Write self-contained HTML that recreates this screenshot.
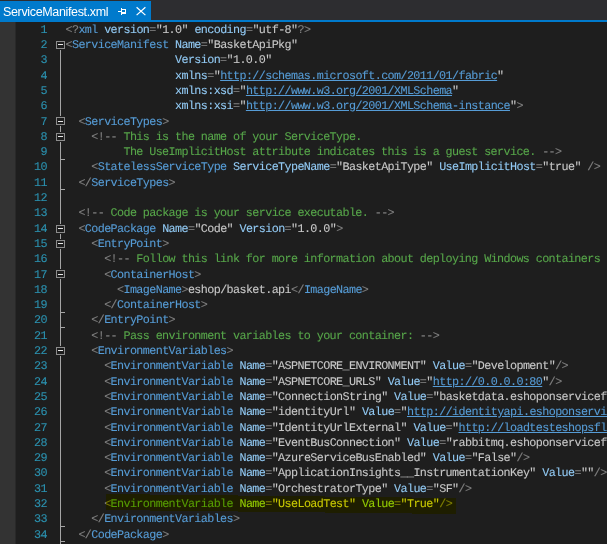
<!DOCTYPE html>
<html><head><meta charset="utf-8"><style>
html,body{margin:0;padding:0;}
body{width:607px;height:544px;overflow:hidden;background:#1E1E1E;position:relative;}
.well{position:absolute;left:0;top:0;width:607px;height:20px;background:#2D2D30;}
.tab{position:absolute;left:0;top:1px;width:151px;height:21px;background:#007ACC;}
.strip{position:absolute;left:0;top:20px;width:607px;height:2px;background:#007ACC;}
.tabt{position:absolute;left:3px;top:0px;font-family:"Liberation Sans",sans-serif;font-size:12.5px;letter-spacing:-0.35px;color:#FFFFFF;white-space:pre;line-height:20px;}
.marg{position:absolute;left:0;top:22px;width:15px;height:522px;background:#333333;border-right:1px solid #292929;}
.ln{position:absolute;text-rendering:geometricPrecision;-webkit-text-stroke:0.1px currentColor;font-family:"Liberation Mono",monospace;font-size:11.75px;letter-spacing:-0.61px;white-space:pre;line-height:15px;height:15px;}
.num{position:absolute;text-rendering:geometricPrecision;-webkit-text-stroke:0.1px currentColor;font-family:"Liberation Mono",monospace;font-size:11.75px;letter-spacing:-0.61px;white-space:pre;line-height:15px;color:#2B91AF;text-align:right;width:40px;}
.d{color:#808080}.n{color:#569CD6}.a{color:#92CAF4}.v{color:#C8C8C8}.c{color:#57A64A}.t{color:#C8C8C8}.u{color:#569CD6;text-decoration:underline;}
</style></head><body>
<div class="well"></div>
<div class="tab"></div>
<div class="strip"></div>
<div class="tabt" style="top:2px">ServiceManifest.xml</div>

<svg style="position:absolute;left:0;top:0" width="607" height="30" shape-rendering="crispEdges">
<g fill="#FFFFFF"><rect x="118" y="11" width="3" height="1"/><rect x="121" y="8" width="1" height="7"/><rect x="122" y="9" width="4" height="1"/><rect x="125" y="9" width="1" height="5"/><rect x="122" y="12" width="3" height="2"/></g>
</svg>
<svg style="position:absolute;left:0;top:0" width="607" height="30">
<path d="M136.6 7.3 L145.4 15.1 M145.4 7.3 L136.6 15.1" stroke="#FFFFFF" stroke-width="1.25" fill="none"/>
</svg>
<div class="marg"></div>

<div class="num" style="left:7.00px;top:23.00px">1</div>
<div class="ln" style="left:65.50px;top:23.00px"><span class="d">&lt;?</span><span class="n">xml</span><span class="t"> </span><span class="a">version</span><span class="d">=</span><span class="v">&quot;1.0&quot;</span><span class="t"> </span><span class="a">encoding</span><span class="d">=</span><span class="v">&quot;utf-8&quot;</span><span class="d">?&gt;</span></div>
<div class="num" style="left:7.00px;top:38.00px">2</div>
<div class="ln" style="left:65.50px;top:38.00px"><span class="d">&lt;</span><span class="n">ServiceManifest</span><span class="t"> </span><span class="a">Name</span><span class="d">=</span><span class="v">&quot;BasketApiPkg&quot;</span></div>
<div class="num" style="left:7.00px;top:53.00px">3</div>
<div class="ln" style="left:65.50px;top:53.00px"><span class="t">                 </span><span class="a">Version</span><span class="d">=</span><span class="v">&quot;1.0.0&quot;</span></div>
<div class="num" style="left:7.00px;top:69.00px">4</div>
<div class="ln" style="left:65.50px;top:69.00px"><span class="t">                 </span><span class="a">xmlns</span><span class="d">=</span><span class="v">&quot;</span><span class="u">http://schemas.microsoft.com/2011/01/fabric</span><span class="v">&quot;</span></div>
<div class="num" style="left:7.00px;top:84.00px">5</div>
<div class="ln" style="left:65.50px;top:84.00px"><span class="t">                 </span><span class="a">xmlns:xsd</span><span class="d">=</span><span class="v">&quot;</span><span class="u">http://www.w3.org/2001/XMLSchema</span><span class="v">&quot;</span></div>
<div class="num" style="left:7.00px;top:99.00px">6</div>
<div class="ln" style="left:65.50px;top:99.00px"><span class="t">                 </span><span class="a">xmlns:xsi</span><span class="d">=</span><span class="v">&quot;</span><span class="u">http://www.w3.org/2001/XMLSchema-instance</span><span class="v">&quot;</span><span class="d">&gt;</span></div>
<div class="num" style="left:7.00px;top:115.00px">7</div>
<div class="ln" style="left:65.50px;top:115.00px"><span class="t">  </span><span class="d">&lt;</span><span class="n">ServiceTypes</span><span class="d">&gt;</span></div>
<div class="num" style="left:7.00px;top:130.00px">8</div>
<div class="ln" style="left:65.50px;top:130.00px"><span class="t">    </span><span class="d">&lt;!--</span><span class="c"> This is the name of your ServiceType.</span></div>
<div class="num" style="left:7.00px;top:145.00px">9</div>
<div class="ln" style="left:65.50px;top:145.00px"><span class="c">         The UseImplicitHost attribute indicates this is a guest service. </span><span class="d">--&gt;</span></div>
<div class="num" style="left:7.00px;top:160.00px">10</div>
<div class="ln" style="left:65.50px;top:160.00px"><span class="t">    </span><span class="d">&lt;</span><span class="n">StatelessServiceType</span><span class="t"> </span><span class="a">ServiceTypeName</span><span class="d">=</span><span class="v">&quot;BasketApiType&quot;</span><span class="t"> </span><span class="a">UseImplicitHost</span><span class="d">=</span><span class="v">&quot;true&quot;</span><span class="t"> </span><span class="d">/&gt;</span></div>
<div class="num" style="left:7.00px;top:176.00px">11</div>
<div class="ln" style="left:65.50px;top:176.00px"><span class="t">  </span><span class="d">&lt;/</span><span class="n">ServiceTypes</span><span class="d">&gt;</span></div>
<div class="num" style="left:7.00px;top:191.00px">12</div>
<div class="num" style="left:7.00px;top:206.00px">13</div>
<div class="ln" style="left:65.50px;top:206.00px"><span class="t">  </span><span class="d">&lt;!--</span><span class="c"> Code package is your service executable. </span><span class="d">--&gt;</span></div>
<div class="num" style="left:7.00px;top:222.00px">14</div>
<div class="ln" style="left:65.50px;top:222.00px"><span class="t">  </span><span class="d">&lt;</span><span class="n">CodePackage</span><span class="t"> </span><span class="a">Name</span><span class="d">=</span><span class="v">&quot;Code&quot;</span><span class="t"> </span><span class="a">Version</span><span class="d">=</span><span class="v">&quot;1.0.0&quot;</span><span class="d">&gt;</span></div>
<div class="num" style="left:7.00px;top:237.00px">15</div>
<div class="ln" style="left:65.50px;top:237.00px"><span class="t">    </span><span class="d">&lt;</span><span class="n">EntryPoint</span><span class="d">&gt;</span></div>
<div class="num" style="left:7.00px;top:252.00px">16</div>
<div class="ln" style="left:65.50px;top:252.00px"><span class="t">      </span><span class="d">&lt;!--</span><span class="c"> Follow this link for more information about deploying Windows containers to Service Fabric</span></div>
<div class="num" style="left:7.00px;top:268.00px">17</div>
<div class="ln" style="left:65.50px;top:268.00px"><span class="t">      </span><span class="d">&lt;</span><span class="n">ContainerHost</span><span class="d">&gt;</span></div>
<div class="num" style="left:7.00px;top:283.00px">18</div>
<div class="ln" style="left:65.50px;top:283.00px"><span class="t">        </span><span class="d">&lt;</span><span class="n">ImageName</span><span class="d">&gt;</span><span class="t">eshop/basket.api</span><span class="d">&lt;/</span><span class="n">ImageName</span><span class="d">&gt;</span></div>
<div class="num" style="left:7.00px;top:298.00px">19</div>
<div class="ln" style="left:65.50px;top:298.00px"><span class="t">      </span><span class="d">&lt;/</span><span class="n">ContainerHost</span><span class="d">&gt;</span></div>
<div class="num" style="left:7.00px;top:313.00px">20</div>
<div class="ln" style="left:65.50px;top:313.00px"><span class="t">    </span><span class="d">&lt;/</span><span class="n">EntryPoint</span><span class="d">&gt;</span></div>
<div class="num" style="left:7.00px;top:329.00px">21</div>
<div class="ln" style="left:65.50px;top:329.00px"><span class="t">    </span><span class="d">&lt;!--</span><span class="c"> Pass environment variables to your container: </span><span class="d">--&gt;</span></div>
<div class="num" style="left:7.00px;top:344.00px">22</div>
<div class="ln" style="left:65.50px;top:344.00px"><span class="t">    </span><span class="d">&lt;</span><span class="n">EnvironmentVariables</span><span class="d">&gt;</span></div>
<div class="num" style="left:7.00px;top:359.00px">23</div>
<div class="ln" style="left:65.50px;top:359.00px"><span class="t">      </span><span class="d">&lt;</span><span class="n">EnvironmentVariable</span><span class="t"> </span><span class="a">Name</span><span class="d">=</span><span class="v">&quot;ASPNETCORE_ENVIRONMENT&quot;</span><span class="t"> </span><span class="a">Value</span><span class="d">=</span><span class="v">&quot;Development&quot;</span><span class="d">/&gt;</span></div>
<div class="num" style="left:7.00px;top:375.00px">24</div>
<div class="ln" style="left:65.50px;top:375.00px"><span class="t">      </span><span class="d">&lt;</span><span class="n">EnvironmentVariable</span><span class="t"> </span><span class="a">Name</span><span class="d">=</span><span class="v">&quot;ASPNETCORE_URLS&quot;</span><span class="t"> </span><span class="a">Value</span><span class="d">=</span><span class="v">&quot;</span><span class="u">http://0.0.0.0:80</span><span class="v">&quot;</span><span class="d">/&gt;</span></div>
<div class="num" style="left:7.00px;top:390.00px">25</div>
<div class="ln" style="left:65.50px;top:390.00px"><span class="t">      </span><span class="d">&lt;</span><span class="n">EnvironmentVariable</span><span class="t"> </span><span class="a">Name</span><span class="d">=</span><span class="v">&quot;ConnectionString&quot;</span><span class="t"> </span><span class="a">Value</span><span class="d">=</span><span class="v">&quot;basketdata.eshoponservicefabric&quot;</span></div>
<div class="num" style="left:7.00px;top:405.00px">26</div>
<div class="ln" style="left:65.50px;top:405.00px"><span class="t">      </span><span class="d">&lt;</span><span class="n">EnvironmentVariable</span><span class="t"> </span><span class="a">Name</span><span class="d">=</span><span class="v">&quot;identityUrl&quot;</span><span class="t"> </span><span class="a">Value</span><span class="d">=</span><span class="v">&quot;</span><span class="u">http://identityapi.eshoponservicefabric</span></div>
<div class="num" style="left:7.00px;top:421.00px">27</div>
<div class="ln" style="left:65.50px;top:421.00px"><span class="t">      </span><span class="d">&lt;</span><span class="n">EnvironmentVariable</span><span class="t"> </span><span class="a">Name</span><span class="d">=</span><span class="v">&quot;IdentityUrlExternal&quot;</span><span class="t"> </span><span class="a">Value</span><span class="d">=</span><span class="v">&quot;</span><span class="u">http://loadtesteshopsfl.westeurope</span></div>
<div class="num" style="left:7.00px;top:436.00px">28</div>
<div class="ln" style="left:65.50px;top:436.00px"><span class="t">      </span><span class="d">&lt;</span><span class="n">EnvironmentVariable</span><span class="t"> </span><span class="a">Name</span><span class="d">=</span><span class="v">&quot;EventBusConnection&quot;</span><span class="t"> </span><span class="a">Value</span><span class="d">=</span><span class="v">&quot;rabbitmq.eshoponservicefabric&quot;</span></div>
<div class="num" style="left:7.00px;top:451.00px">29</div>
<div class="ln" style="left:65.50px;top:451.00px"><span class="t">      </span><span class="d">&lt;</span><span class="n">EnvironmentVariable</span><span class="t"> </span><span class="a">Name</span><span class="d">=</span><span class="v">&quot;AzureServiceBusEnabled&quot;</span><span class="t"> </span><span class="a">Value</span><span class="d">=</span><span class="v">&quot;False&quot;</span><span class="d">/&gt;</span></div>
<div class="num" style="left:7.00px;top:466.00px">30</div>
<div class="ln" style="left:65.50px;top:466.00px"><span class="t">      </span><span class="d">&lt;</span><span class="n">EnvironmentVariable</span><span class="t"> </span><span class="a">Name</span><span class="d">=</span><span class="v">&quot;ApplicationInsights__InstrumentationKey&quot;</span><span class="t"> </span><span class="a">Value</span><span class="d">=</span><span class="v">&quot;&quot;</span><span class="d">/&gt;</span></div>
<div class="num" style="left:7.00px;top:482.00px">31</div>
<div class="ln" style="left:65.50px;top:482.00px"><span class="t">      </span><span class="d">&lt;</span><span class="n">EnvironmentVariable</span><span class="t"> </span><span class="a">Name</span><span class="d">=</span><span class="v">&quot;OrchestratorType&quot;</span><span class="t"> </span><span class="a">Value</span><span class="d">=</span><span class="v">&quot;SF&quot;</span><span class="d">/&gt;</span></div>
<div class="num" style="left:7.00px;top:497.00px">32</div>
<div class="ln" style="left:65.50px;top:497.00px"><span class="t">      </span><span class="d">&lt;</span><span class="n">EnvironmentVariable</span><span class="t"> </span><span class="a">Name</span><span class="d">=</span><span class="v">&quot;UseLoadTest&quot;</span><span class="t"> </span><span class="a">Value</span><span class="d">=</span><span class="v">&quot;True&quot;</span><span class="d">/&gt;</span></div>
<div class="num" style="left:7.00px;top:512.00px">33</div>
<div class="ln" style="left:65.50px;top:512.00px"><span class="t">    </span><span class="d">&lt;/</span><span class="n">EnvironmentVariables</span><span class="d">&gt;</span></div>
<div class="num" style="left:7.00px;top:528.00px">34</div>
<div class="ln" style="left:65.50px;top:528.00px"><span class="t">  </span><span class="d">&lt;/</span><span class="n">CodePackage</span><span class="d">&gt;</span></div>
<svg style="position:absolute;left:0;top:0" width="607" height="544" shape-rendering="crispEdges">
<rect x="60" y="50" width="1" height="544" fill="#A5A5A5"/>
<rect x="61" y="159" width="4" height="1" fill="#A5A5A5"/>
<rect x="61" y="189" width="4" height="1" fill="#A5A5A5"/>
<rect x="61" y="312" width="4" height="1" fill="#A5A5A5"/>
<rect x="61" y="327" width="4" height="1" fill="#A5A5A5"/>
<rect x="61" y="526" width="4" height="1" fill="#A5A5A5"/>
<rect x="61" y="541" width="4" height="1" fill="#A5A5A5"/>
<rect x="56" y="40" width="9" height="10" fill="#1E1E1E"/>
<rect x="56.5" y="41.5" width="8" height="7" fill="none" stroke="#8C8C8C" stroke-width="1"/>
<rect x="58" y="44" width="5" height="1" fill="#E8E8E8"/>
<rect x="56" y="116" width="9" height="10" fill="#1E1E1E"/>
<rect x="56.5" y="117.5" width="8" height="7" fill="none" stroke="#8C8C8C" stroke-width="1"/>
<rect x="58" y="121" width="5" height="1" fill="#E8E8E8"/>
<rect x="56" y="132" width="9" height="10" fill="#1E1E1E"/>
<rect x="56.5" y="133.5" width="8" height="7" fill="none" stroke="#8C8C8C" stroke-width="1"/>
<rect x="58" y="136" width="5" height="1" fill="#E8E8E8"/>
<rect x="56" y="224" width="9" height="10" fill="#1E1E1E"/>
<rect x="56.5" y="225.5" width="8" height="7" fill="none" stroke="#8C8C8C" stroke-width="1"/>
<rect x="58" y="228" width="5" height="1" fill="#E8E8E8"/>
<rect x="56" y="239" width="9" height="10" fill="#1E1E1E"/>
<rect x="56.5" y="240.5" width="8" height="7" fill="none" stroke="#8C8C8C" stroke-width="1"/>
<rect x="58" y="243" width="5" height="1" fill="#E8E8E8"/>
<rect x="56" y="269" width="9" height="10" fill="#1E1E1E"/>
<rect x="56.5" y="270.5" width="8" height="7" fill="none" stroke="#8C8C8C" stroke-width="1"/>
<rect x="58" y="274" width="5" height="1" fill="#E8E8E8"/>
<rect x="56" y="346" width="9" height="10" fill="#1E1E1E"/>
<rect x="56.5" y="347.5" width="8" height="7" fill="none" stroke="#8C8C8C" stroke-width="1"/>
<rect x="58" y="350" width="5" height="1" fill="#E8E8E8"/>
</svg>
<svg style="position:absolute;left:0;top:0;mix-blend-mode:multiply" width="607" height="544" shape-rendering="crispEdges">
<polygon points="106,494 456,498 456,514 106,510" fill="#FFFF00"/>
</svg>
</body></html>
